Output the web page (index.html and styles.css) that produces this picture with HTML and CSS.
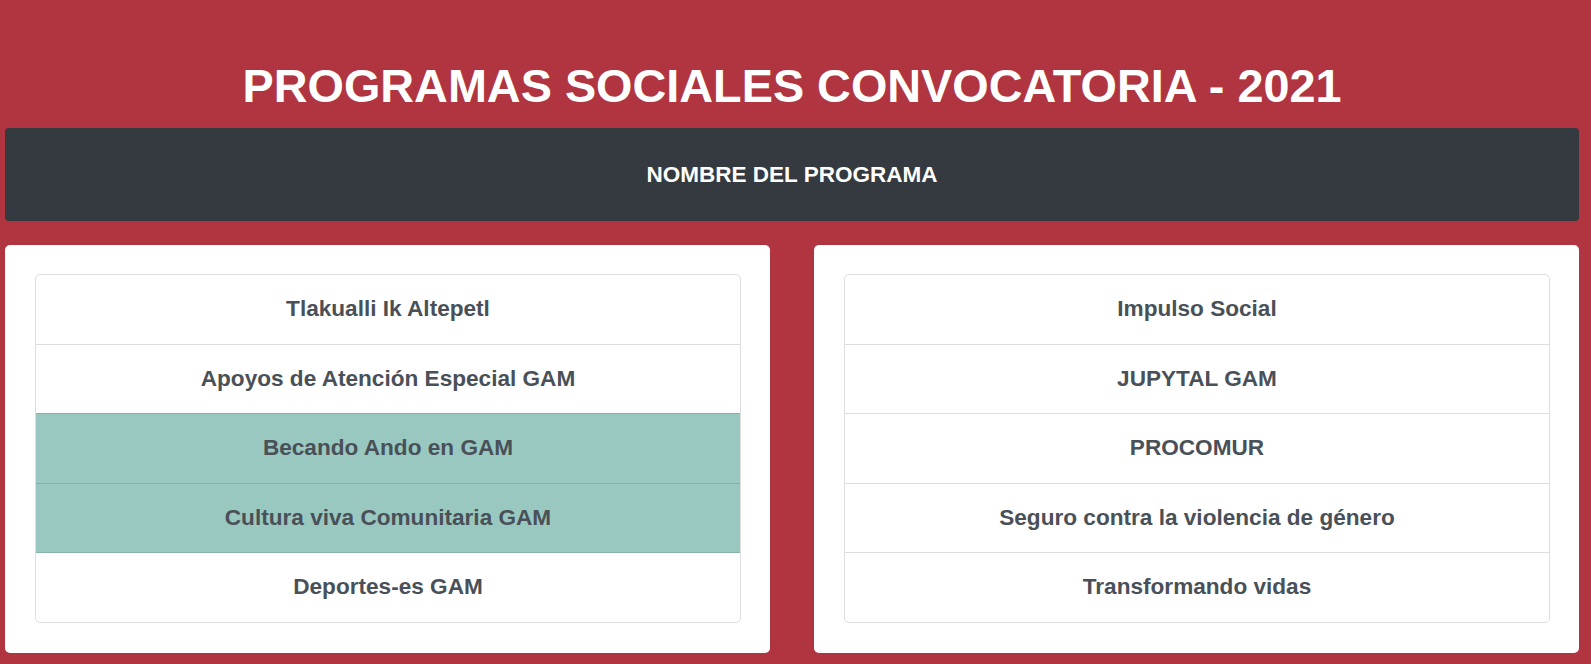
FILE: index.html
```html
<!DOCTYPE html>
<html lang="es">
<head>
    <meta charset="UTF-8">
    <meta name="viewport" content="width=device-width, initial-scale=1.0">
    <title>Programas Sociales Convocatoria 2021</title>
    <link rel="stylesheet" href="styles.css">
</head>
<body>
    <div class="container">
        <h1 class="page-title">PROGRAMAS SOCIALES CONVOCATORIA - 2021</h1>
        <div class="header-bar">NOMBRE DEL PROGRAMA</div>

        <div class="programs">
            <div class="card">
                <ul class="list-group">
                    <li class="list-item">Tlakualli Ik Altepetl</li>
                    <li class="list-item">Apoyos de Atención Especial GAM</li>
                    <li class="list-item active">Becando Ando en GAM</li>
                    <li class="list-item active">Cultura viva Comunitaria GAM</li>
                    <li class="list-item">Deportes-es GAM</li>
                </ul>
            </div>
            <div class="card">
                <ul class="list-group">
                    <li class="list-item">Impulso Social</li>
                    <li class="list-item">JUPYTAL GAM</li>
                    <li class="list-item">PROCOMUR</li>
                    <li class="list-item">Seguro contra la violencia de género</li>
                    <li class="list-item">Transformando vidas</li>
                </ul>
            </div>
        </div>
    </div>
</body>
</html>
```

FILE: styles.css
```css
body {
    margin: 0;
    background-color: #b03541;
    font-family: "Liberation Sans", Arial, sans-serif;
}

.container {
    margin-left: 5px;
    width: 1574px;
}

.page-title {
    margin: 58px 0 14px;
    text-align: center;
    color: #fff;
    font-size: 46.8px;
    line-height: 56px;
    font-weight: bold;
}

.header-bar {
    height: 93px;
    display: flex;
    align-items: center;
    justify-content: center;
    background-color: #343a40;
    border-radius: 4px;
    color: #fff;
    font-size: 22.5px;
    font-weight: bold;
}

.programs {
    display: grid;
    grid-template-columns: 1fr 1fr;
    gap: 44px;
    margin-top: 24px;
}

.card {
    background-color: #fff;
    border-radius: 5px;
    padding: 29px 29px 30px 30px;
}

.list-group {
    list-style: none;
    margin: 0;
    padding: 0;
    border: 1px solid #dedede;
    border-radius: 5px;
    overflow: hidden;
}

.list-item {
    height: 68.5px;
    display: flex;
    align-items: center;
    justify-content: center;
    color: #495057;
    font-size: 22.6px;
    font-weight: bold;
    border-top: 1px solid #dedede;
}

.list-item:first-child {
    border-top: none;
}

.list-item.active {
    background-color: #99c8c1;
    border-top-color: #85b3ac;
    margin: 0 -1px;
}

.list-item.active + .list-item {
    border-top-color: #85b3ac;
}
```
